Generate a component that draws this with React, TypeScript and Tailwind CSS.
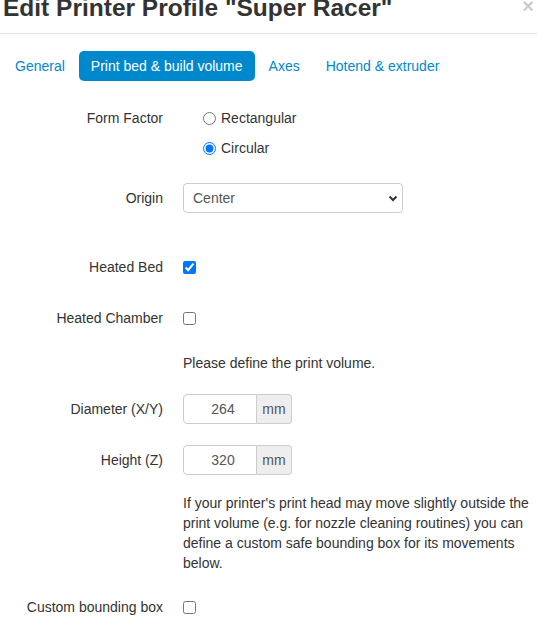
import React from "react";

interface RowProps {
  label?: string;
  tall?: boolean;
  className?: string;
  children: React.ReactNode;
}

function Row({ label, tall, className, children }: RowProps) {
  return (
    <div className={`grid grid-cols-[160px_1fr] gap-x-[20px] ${className ?? ""}`}>
      <label className={`text-right ${tall ? "leading-[30px]" : "leading-[20px]"}`}>{label}</label>
      <div>{children}</div>
    </div>
  );
}

function UnitInput({ value }: { value: string }) {
  return (
    <div className="flex h-[30px]">
      <input
        type="text"
        readOnly
        defaultValue={value}
        className="h-[30px] w-[74px] rounded-l-[4px] border border-[#ccc] bg-white pl-[12px] pr-[6px] text-center text-[14px] text-[#555] outline-none"
      />
      <span className="flex h-[30px] w-[35px] items-center justify-center rounded-r-[4px] border border-l-0 border-[#ccc] bg-[#eee] text-[14px] text-[#555]">
        mm
      </span>
    </div>
  );
}

const tabs = ["General", "Print bed & build volume", "Axes", "Hotend & extruder"];

export default function App() {
  return (
    <div className="min-h-[631px] overflow-hidden bg-white font-['Liberation_Sans',Arial,sans-serif] text-[14px] leading-[20px] text-[#333]">
      <header className="flex items-start justify-between border-b border-[#e5e5e5] pb-[5px] pl-[3px] pr-[3px]">
        <h3 className="-mt-[12px] text-[24.5px] font-bold leading-[40px]">Edit Printer Profile "Super Racer"</h3>
        <button className="-mt-[4px] text-[20px] font-bold leading-[20px] text-black opacity-20">×</button>
      </header>

      <div className="pl-[3px] pr-[2px]">
        <nav className="mt-[17px] flex gap-[2px]">
          {tabs.map((tab) => (
            <a
              key={tab}
              className={`flex h-[30px] items-center rounded-[5px] px-[12px] ${
                tab === "Print bed & build volume" ? "bg-[#0088cc] text-white" : "text-[#0088cc]"
              }`}
            >
              {tab}
            </a>
          ))}
        </nav>

        <form>
          <Row label="Form Factor" className="mt-[27px]">
            <label className="flex h-[20px] items-center pl-[20px]">
              <input type="radio" name="ff" className="m-0 h-[13px] w-[13px]" />
              <span className="ml-[5px]">Rectangular</span>
            </label>
            <label className="mt-[10px] flex h-[20px] items-center pl-[20px]">
              <input type="radio" name="ff" defaultChecked className="m-0 h-[13px] w-[13px]" />
              <span className="ml-[5px]">Circular</span>
            </label>
          </Row>

          <Row label="Origin" tall className="mt-[25px]">
            <div className="relative w-[220px]">
              <select className="h-[30px] w-[220px] appearance-none rounded-[4px] border border-[#ccc] bg-white pl-[9px] text-[14px] text-[#555] outline-none">
                <option>Center</option>
              </select>
              <svg
                className="pointer-events-none absolute right-[5px] top-[12px]"
                width="10"
                height="7"
                viewBox="0 0 10 7"
              >
                <path d="M1.5 1.5 L5 5 L8.5 1.5" fill="none" stroke="#333" strokeWidth="2" />
              </svg>
            </div>
          </Row>

          <Row label="Heated Bed" className="mt-[44px]">
            <div className="flex h-[20px] items-center">
              <input type="checkbox" defaultChecked className="m-0 h-[13px] w-[13px]" />
            </div>
          </Row>

          <Row label="Heated Chamber" className="mt-[31px]">
            <div className="flex h-[20px] items-center">
              <input type="checkbox" className="m-0 h-[13px] w-[13px]" />
            </div>
          </Row>

          <Row className="mt-[25px]">
            <p>Please define the print volume.</p>
          </Row>

          <Row label="Diameter (X/Y)" tall className="mt-[21px]">
            <UnitInput value="264" />
          </Row>

          <Row label="Height (Z)" tall className="mt-[21px]">
            <UnitInput value="320" />
          </Row>

          <Row className="mt-[18px]">
            <p>
              If your printer's print head may move slightly outside the print volume (e.g. for nozzle cleaning
              routines) you can define a custom safe bounding box for its movements below.
            </p>
          </Row>

          <Row label="Custom bounding box" className="mt-[24px]">
            <div className="flex h-[20px] items-center">
              <input type="checkbox" className="m-0 h-[13px] w-[13px]" />
            </div>
          </Row>
        </form>
      </div>
    </div>
  );
}
